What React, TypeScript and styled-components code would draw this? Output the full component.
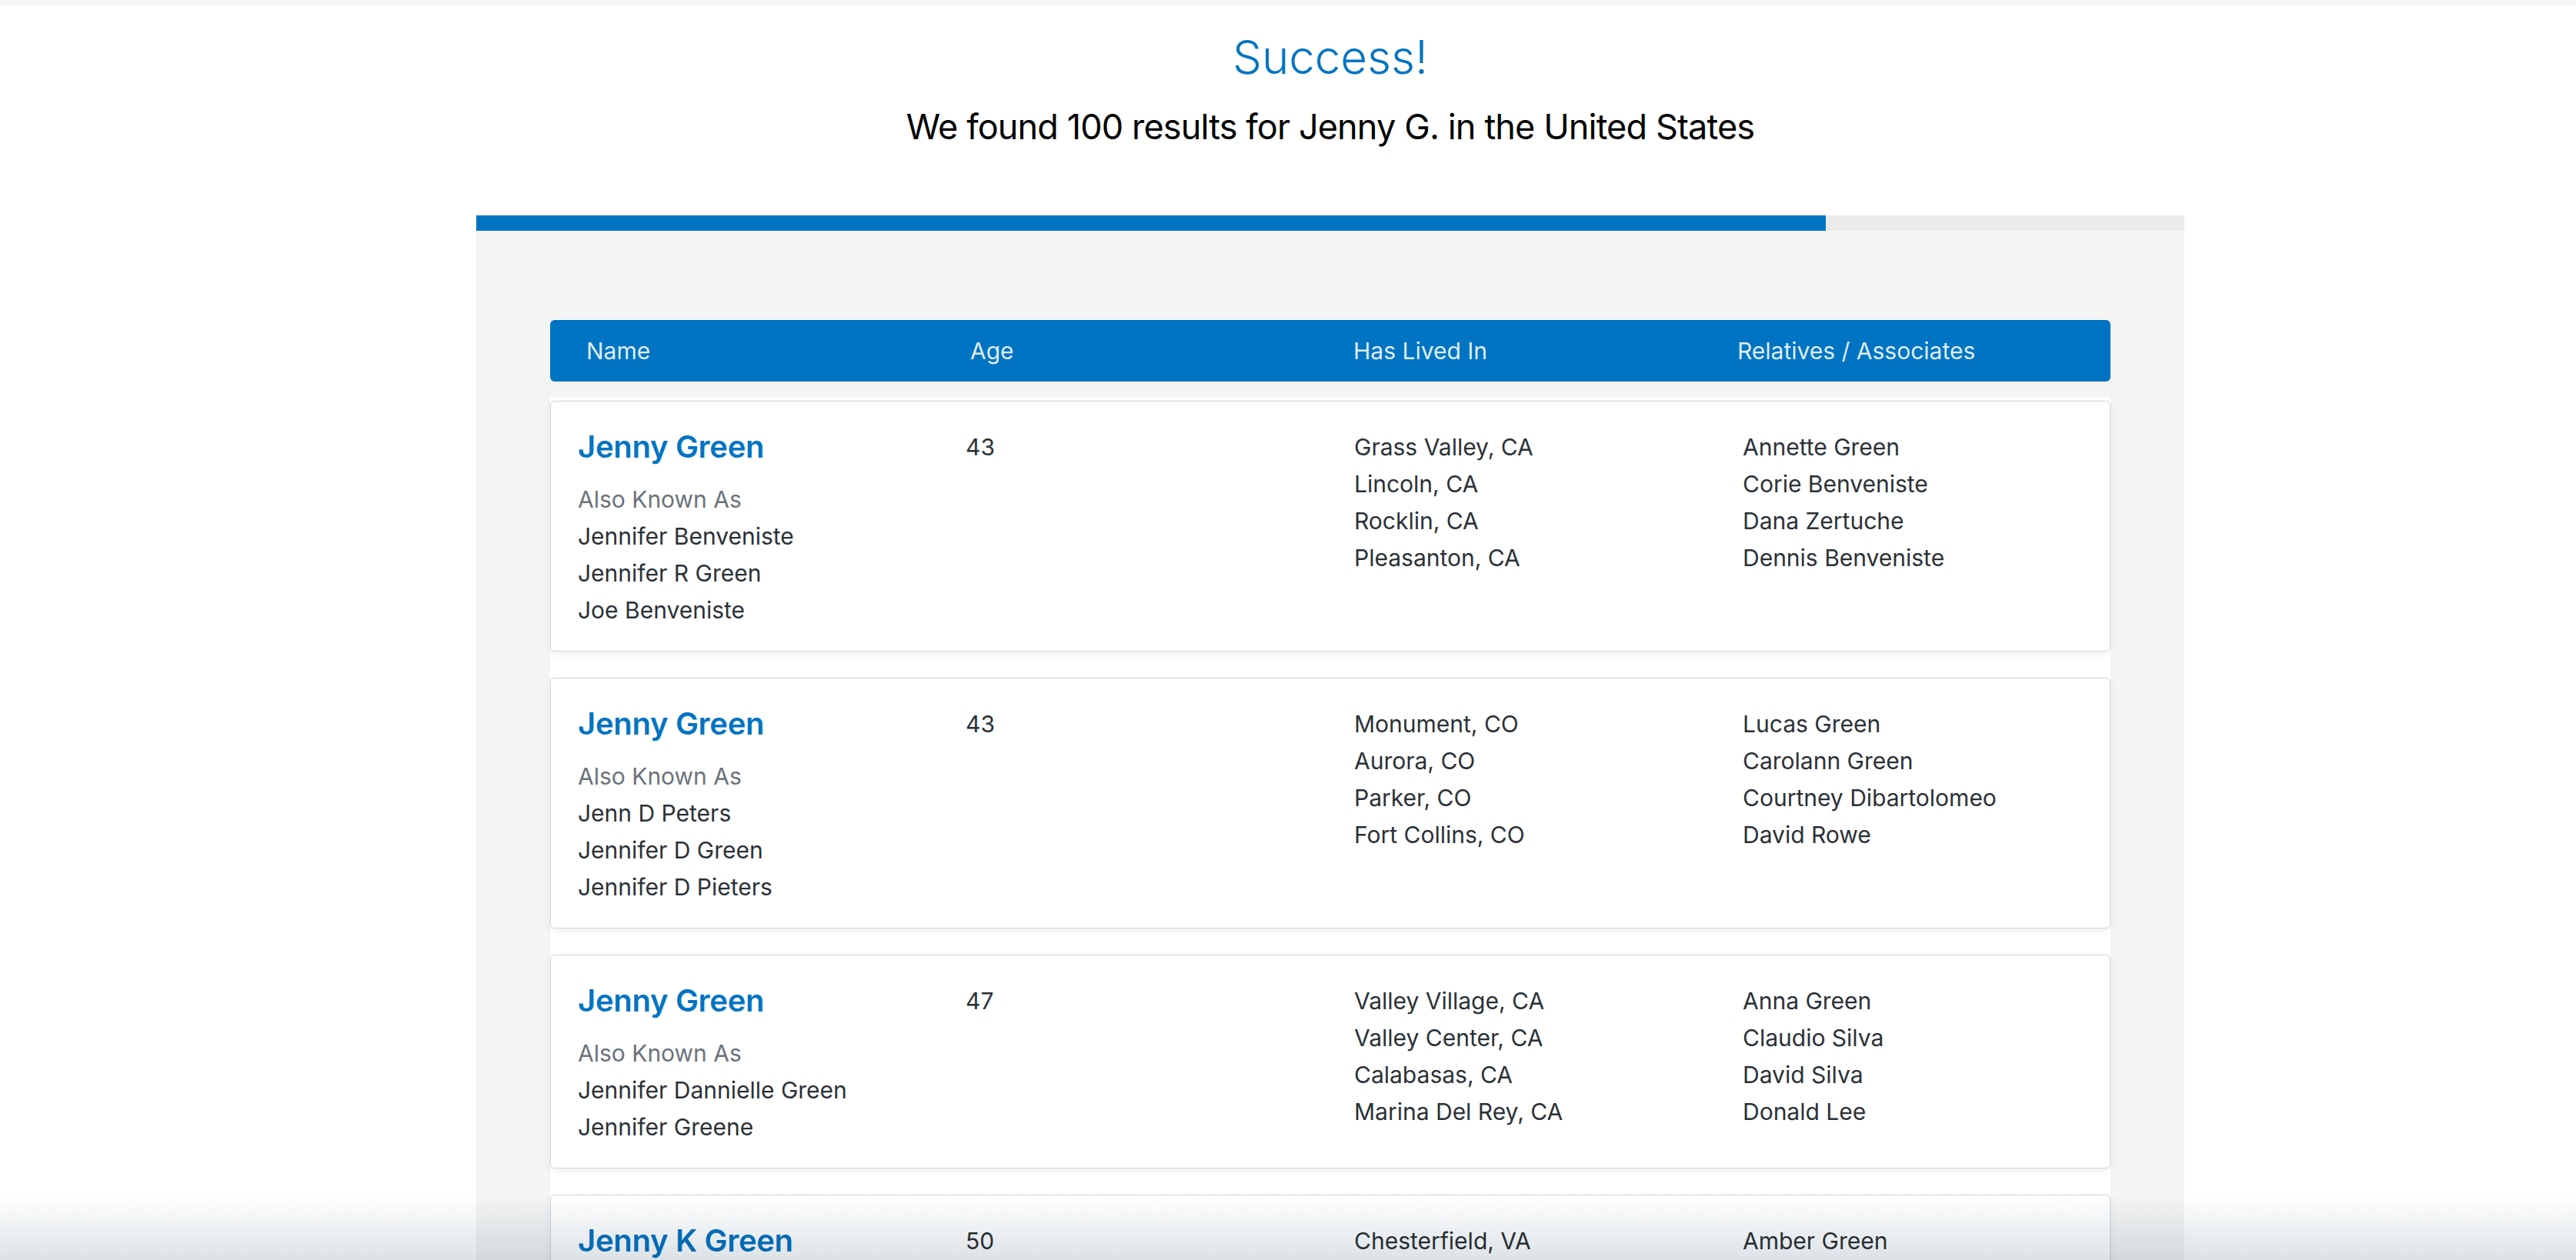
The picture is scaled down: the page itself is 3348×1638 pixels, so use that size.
import React from "react";
import styled, { createGlobalStyle } from "styled-components";

const GlobalStyle = createGlobalStyle`
  html, body {
    margin: 0;
    padding: 0;
    background: #ffffff;
    font-family: Inter, "Noto Sans", "Liberation Sans", sans-serif;
  }
  * { box-sizing: border-box; }
`;

const BLUE = "#0074c2";

const TopStrip = styled.div`
  height: 7px;
  background: #f6f6f6;
`;

const Page = styled.main`
  display: flex;
  flex-direction: column;
  align-items: center;
  padding-left: 110px;
`;

const Title = styled.h1`
  margin: 31px 0 0;
  font-size: 60px;
  line-height: 72px;
  font-weight: 300;
  color: ${BLUE};
  text-align: center;
`;

const Subtitle = styled.h2`
  margin: 28px 0 0;
  font-size: 45px;
  line-height: 54px;
  font-weight: 400;
  letter-spacing: -0.85px;
  color: #000;
  text-align: center;
`;

const Panel = styled.section`
  width: 2220px;
  margin-top: 88px;
  background: #f4f4f4;
  display: flex;
  flex-direction: column;
`;

const Progress = styled.div`
  height: 20px;
  background: #ebebeb;
  display: flex;
`;

const ProgressFill = styled.div`
  height: 100%;
  background: ${BLUE};
`;

const PanelBody = styled.div`
  padding: 116px 96px 0;
  display: flex;
  flex-direction: column;
  gap: 20px;
`;

const HeaderBar = styled.div`
  height: 80px;
  background: ${BLUE};
  border-radius: 6px;
  padding-left: 47px;
  display: grid;
  grid-template-columns: 499px 498px 499px 1fr;
  align-items: center;
`;

const HeaderCell = styled.div`
  font-size: 30px;
  line-height: 36px;
  color: rgba(255, 255, 255, 0.88);
`;

const List = styled.div`
  background: #ffffff;
  padding-top: 5px;
  display: flex;
  flex-direction: column;
  gap: 34px;
`;

const Card = styled.article`
  background: #ffffff;
  border: 1px solid #cdd6de;
  border-radius: 6px;
  box-shadow: 0 3px 8px rgba(30, 50, 70, 0.08);
  padding: 35px 35px 29px;
  display: grid;
  grid-template-columns: 504px 505px 505px 1fr;
  align-items: start;
`;

const Column = styled.div`
  display: flex;
  flex-direction: column;
`;

const PersonName = styled.a`
  font-size: 40px;
  line-height: 48px;
  font-weight: 600;
  letter-spacing: -0.3px;
  color: ${BLUE};
  text-decoration: none;
  margin-bottom: 20px;
`;

const Label = styled.div`
  font-size: 30px;
  line-height: 48px;
  color: #6b737b;
`;

const Line = styled.div`
  font-size: 30px;
  line-height: 48px;
  color: #2b3137;
`;

const BottomFade = styled.div`
  position: fixed;
  left: 0;
  right: 0;
  bottom: 0;
  height: 84px;
  pointer-events: none;
  mix-blend-mode: multiply;
  background: linear-gradient(
    to bottom,
    rgba(255, 255, 255, 1) 0%,
    rgba(238, 241, 243, 1) 50%,
    rgba(220, 226, 230, 1) 100%
  );
`;

type Person = {
  name: string;
  age: number;
  aka: string[];
  places: string[];
  relatives: string[];
};

const people: Person[] = [
  {
    name: "Jenny Green",
    age: 43,
    aka: ["Jennifer Benveniste", "Jennifer R Green", "Joe Benveniste"],
    places: ["Grass Valley, CA", "Lincoln, CA", "Rocklin, CA", "Pleasanton, CA"],
    relatives: ["Annette Green", "Corie Benveniste", "Dana Zertuche", "Dennis Benveniste"],
  },
  {
    name: "Jenny Green",
    age: 43,
    aka: ["Jenn D Peters", "Jennifer D Green", "Jennifer D Pieters"],
    places: ["Monument, CO", "Aurora, CO", "Parker, CO", "Fort Collins, CO"],
    relatives: ["Lucas Green", "Carolann Green", "Courtney Dibartolomeo", "David Rowe"],
  },
  {
    name: "Jenny Green",
    age: 47,
    aka: ["Jennifer Dannielle Green", "Jennifer Greene"],
    places: ["Valley Village, CA", "Valley Center, CA", "Calabasas, CA", "Marina Del Rey, CA"],
    relatives: ["Anna Green", "Claudio Silva", "David Silva", "Donald Lee"],
  },
  {
    name: "Jenny K Green",
    age: 50,
    aka: [],
    places: ["Chesterfield, VA"],
    relatives: ["Amber Green"],
  },
];

const columns = ["Name", "Age", "Has Lived In", "Relatives / Associates"];

function PersonCard({ person }: { person: Person }) {
  return (
    <Card>
      <Column>
        <PersonName href="#">{person.name}</PersonName>
        {person.aka.length > 0 && <Label>Also Known As</Label>}
        {person.aka.map((a) => (
          <Line key={a}>{a}</Line>
        ))}
      </Column>
      <Column>
        <Line>{person.age}</Line>
      </Column>
      <Column>
        {person.places.map((p) => (
          <Line key={p}>{p}</Line>
        ))}
      </Column>
      <Column>
        {person.relatives.map((r) => (
          <Line key={r}>{r}</Line>
        ))}
      </Column>
    </Card>
  );
}

export default function App() {
  const progress = 79;
  return (
    <>
      <GlobalStyle />
      <TopStrip />
      <Page>
        <Title>Success!</Title>
        <Subtitle>We found 100 results for Jenny G. in the United States</Subtitle>
        <Panel>
          <Progress>
            <ProgressFill style={{ width: `${progress}%` }} />
          </Progress>
          <PanelBody>
            <HeaderBar>
              {columns.map((c) => (
                <HeaderCell key={c}>{c}</HeaderCell>
              ))}
            </HeaderBar>
            <List>
              {people.map((p, i) => (
                <PersonCard key={i} person={p} />
              ))}
            </List>
          </PanelBody>
        </Panel>
      </Page>
      <BottomFade />
    </>
  );
}
